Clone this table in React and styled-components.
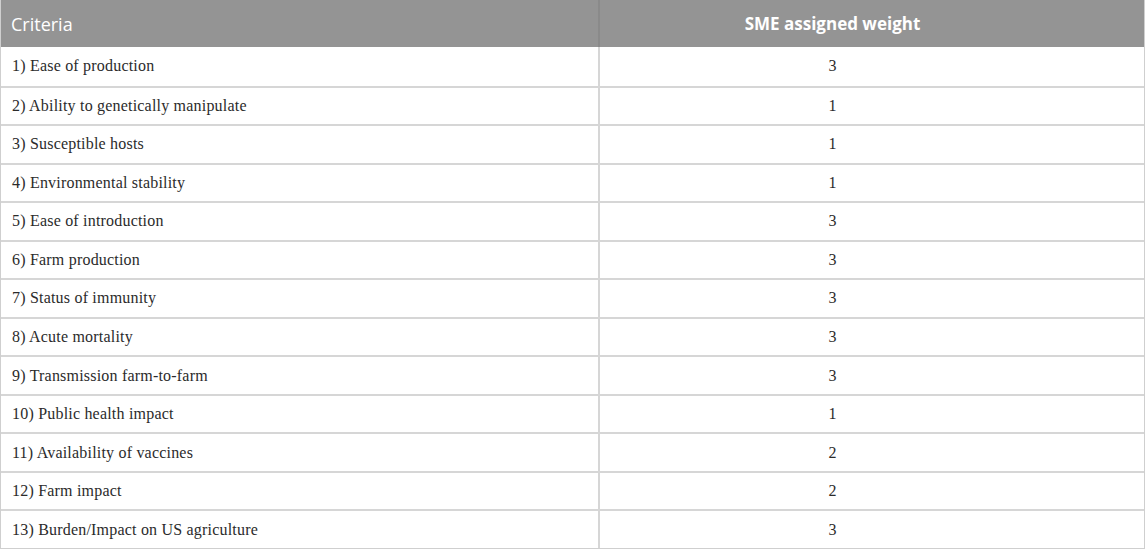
import React from 'react'
import styled, { createGlobalStyle } from 'styled-components'

const GlobalStyle = createGlobalStyle`
html, body {
  margin: 0;
  padding: 0;
  background: #ffffff;
}
`

const Table = styled.div`
display: grid;
grid-template-columns: 597px 1fr;
grid-template-rows: 47px repeat(13, 1fr);
width: 1145px;
height: 549px;
box-sizing: border-box;
border: 1px solid #cfcfcf;
border-top: none;
`

const HeadCell = styled.div`
display: flex;
align-items: center;
justify-content: ${({ center }) => center ? 'center' : 'flex-start'};
padding: ${({ center }) => center ? '0 89px 0 10px' : '0 10px'};
background: #949494;
color: #ffffff;
font-family: "Open Sans", sans-serif;
font-size: ${({ bold }) => bold ? '17px' : '18px'};
font-weight: ${({ bold }) => bold ? 700 : 400};
border-left: ${({ divider }) => divider ? '2px solid #8a8a8a' : 'none'};
`

const Cell = styled.div`
display: flex;
align-items: center;
justify-content: ${({ center }) => center ? 'center' : 'flex-start'};
padding: ${({ center }) => center ? '0 89px 0 10px' : '0 11px'};
border-top: ${({ first }) => first ? 'none' : '2px solid #d6d6d6'};
border-left: ${({ divider }) => divider ? '2px solid #d6d6d6' : 'none'};
color: #2b2b2b;
font-family: "Liberation Serif", "Times New Roman", serif;
font-size: 16px;
letter-spacing: 0.2px;
`

const rows = [
  ['1) Ease of production', 3],
  ['2) Ability to genetically manipulate', 1],
  ['3) Susceptible hosts', 1],
  ['4) Environmental stability', 1],
  ['5) Ease of introduction', 3],
  ['6) Farm production', 3],
  ['7) Status of immunity', 3],
  ['8) Acute mortality', 3],
  ['9) Transmission farm-to-farm', 3],
  ['10) Public health impact', 1],
  ['11) Availability of vaccines', 2],
  ['12) Farm impact', 2],
  ['13) Burden/Impact on US agriculture', 3],
]

const App = () => (
  <>
    <GlobalStyle />
    <Table>
      <HeadCell>Criteria</HeadCell>
      <HeadCell center bold divider>SME assigned weight</HeadCell>
      {rows.map(([name, weight], i) => (
        <React.Fragment key={name}>
          <Cell first={i === 0}>{name}</Cell>
          <Cell first={i === 0} center divider>{weight}</Cell>
        </React.Fragment>
      ))}
    </Table>
  </>
)

export default App
